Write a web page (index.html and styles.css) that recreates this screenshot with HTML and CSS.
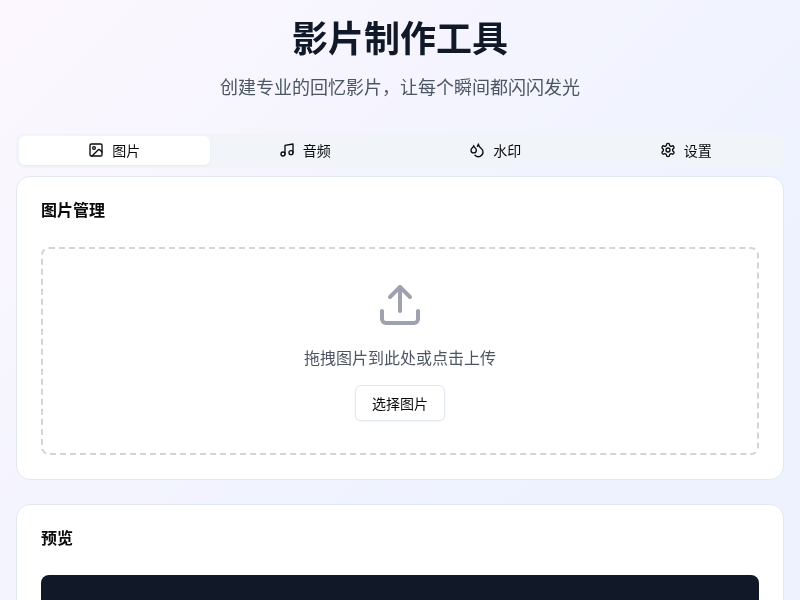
FILE: index.html
```html
<!DOCTYPE html>
<html lang="zh-CN">
<head>
<meta charset="utf-8">
<title>影片制作工具</title>
<link rel="stylesheet" href="styles.css">
</head>
<body>
<main class="page">
  <header class="hero">
    <h1 class="hero-title">影片制作工具</h1>
    <p class="hero-sub">创建专业的回忆影片，让每个瞬间都闪闪发光</p>
  </header>
  <nav class="tabs">
    <div class="tab tab-active">
      <svg class="tab-icon" viewBox="0 0 24 24"><rect x="3" y="3" width="18" height="18" rx="2"/><circle cx="9" cy="9" r="2"/><path d="m21 15-3.086-3.086a2 2 0 0 0-2.828 0L6 21"/></svg>
      <span>图片</span>
    </div>
    <div class="tab">
      <svg class="tab-icon" viewBox="0 0 24 24"><path d="M9 18V5l12-2v13"/><circle cx="6" cy="18" r="3"/><circle cx="18" cy="16" r="3"/></svg>
      <span>音频</span>
    </div>
    <div class="tab">
      <svg class="tab-icon" viewBox="0 0 24 24"><path d="M7 16.3c2.2 0 4-1.83 4-4.05 0-1.16-.57-2.26-1.71-3.19S7.29 6.75 7 5.3c-.29 1.45-1.14 2.84-2.29 3.76S3 11.1 3 12.25c0 2.22 1.8 4.05 4 4.05z"/><path d="M12.56 6.6A10.97 10.97 0 0 0 14 3.02c.5 2.5 2 4.9 4 6.5s3 3.5 3 5.5a6.98 6.98 0 0 1-11.91 4.97"/></svg>
      <span>水印</span>
    </div>
    <div class="tab">
      <svg class="tab-icon" viewBox="0 0 24 24"><path d="M12.22 2h-.44a2 2 0 0 0-2 2v.18a2 2 0 0 1-1 1.73l-.43.25a2 2 0 0 1-2 0l-.15-.08a2 2 0 0 0-2.73.73l-.22.38a2 2 0 0 0 .73 2.73l.15.1a2 2 0 0 1 1 1.72v.51a2 2 0 0 1-1 1.74l-.15.09a2 2 0 0 0-.73 2.73l.22.38a2 2 0 0 0 2.73.73l.15-.08a2 2 0 0 1 2 0l.43.25a2 2 0 0 1 1 1.73V20a2 2 0 0 0 2 2h.44a2 2 0 0 0 2-2v-.18a2 2 0 0 1 1-1.73l.43-.25a2 2 0 0 1 2 0l.15.08a2 2 0 0 0 2.73-.73l.22-.39a2 2 0 0 0-.73-2.73l-.15-.08a2 2 0 0 1-1-1.74v-.5a2 2 0 0 1 1-1.74l.15-.09a2 2 0 0 0 .73-2.73l-.22-.38a2 2 0 0 0-2.73-.73l-.15.08a2 2 0 0 1-2 0l-.43-.25a2 2 0 0 1-1-1.73V4a2 2 0 0 0-2-2z"/><circle cx="12" cy="12" r="3"/></svg>
      <span>设置</span>
    </div>
  </nav>
  <section class="card">
    <h2 class="card-title">图片管理</h2>
    <div class="dropzone">
      <svg class="drop-icon" viewBox="0 0 24 24"><path d="M21 15v4a2 2 0 0 1-2 2H5a2 2 0 0 1-2-2v-4"/><polyline points="17 8 12 3 7 8"/><line x1="12" y1="3" x2="12" y2="15"/></svg>
      <p class="drop-text">拖拽图片到此处或点击上传</p>
      <button class="drop-btn" type="button">选择图片</button>
    </div>
  </section>
  <section class="card">
    <h2 class="card-title">预览</h2>
    <div class="preview"></div>
  </section>
</main>
</body>
</html>
```
FILE: styles.css
```css
* { box-sizing: border-box; }
html, body { margin: 0; padding: 0; height: 600px; overflow: hidden; }
body {
  font-family: "Inter", "Noto Sans CJK SC", sans-serif;
  color: #0a0a0a;
  background: linear-gradient(135deg, #fcf7ff 0%, #edf2fe 75%);
}
.page { padding: 16px; display: flex; flex-direction: column; will-change: transform; }
.hero { text-align: center; margin-bottom: 29px; }
.hero-title { margin: 1px 0 0; font-size: 36px; line-height: 44px; font-weight: 700; color: #111827; }
.hero-sub { margin: 13px 0 0; font-size: 18px; line-height: 28px; color: #4b5563; }
.tabs {
  display: grid; grid-template-columns: repeat(4, 1fr);
  padding: 3px; height: 35px; border-radius: 8px;
  background: #f1f4f9; margin-top: 2px; margin-bottom: 8px;
}
.tab {
  display: flex; align-items: center; justify-content: center; gap: 8px;
  padding-bottom: 1px;
  font-size: 14px; border-radius: 6px; color: #0a0a0a;
}
.tab-active { background: #fff; box-shadow: 0 1px 2px rgba(0,0,0,.05); }
.tab-icon { width: 16px; height: 16px; fill: none; stroke: currentColor; stroke-width: 2; stroke-linecap: round; stroke-linejoin: round; }
.card {
  background: #fff; border: 1px solid #e2e8f0; border-radius: 14px;
  padding: 24px; margin-bottom: 24px;
}
.card-title { margin: -1px 0 27px; font-size: 16px; line-height: 20px; font-weight: 600; color: #0a0a0a; }
.dropzone {
  border: 2px dashed #d1d5db; border-radius: 8px; height: 208px;
  display: flex; flex-direction: column; align-items: center; padding-top: 32px;
}
.drop-icon { width: 48px; height: 48px; fill: none; stroke: #9ca3af; stroke-width: 2; stroke-linecap: round; stroke-linejoin: round; }
.drop-text { margin: 17px 0 0; font-size: 16px; line-height: 24px; color: #4b5563; }
.drop-btn {
  margin-top: 15px; height: 36px; padding: 0 16px; font: inherit; font-size: 14px;
  color: #0a0a0a; background: #fff; border: 1px solid #e2e8f0; border-radius: 6px;
  box-shadow: 0 1px 2px rgba(0,0,0,.05);
}
.preview { height: 300px; background: #111827; border-radius: 8px; }
```
